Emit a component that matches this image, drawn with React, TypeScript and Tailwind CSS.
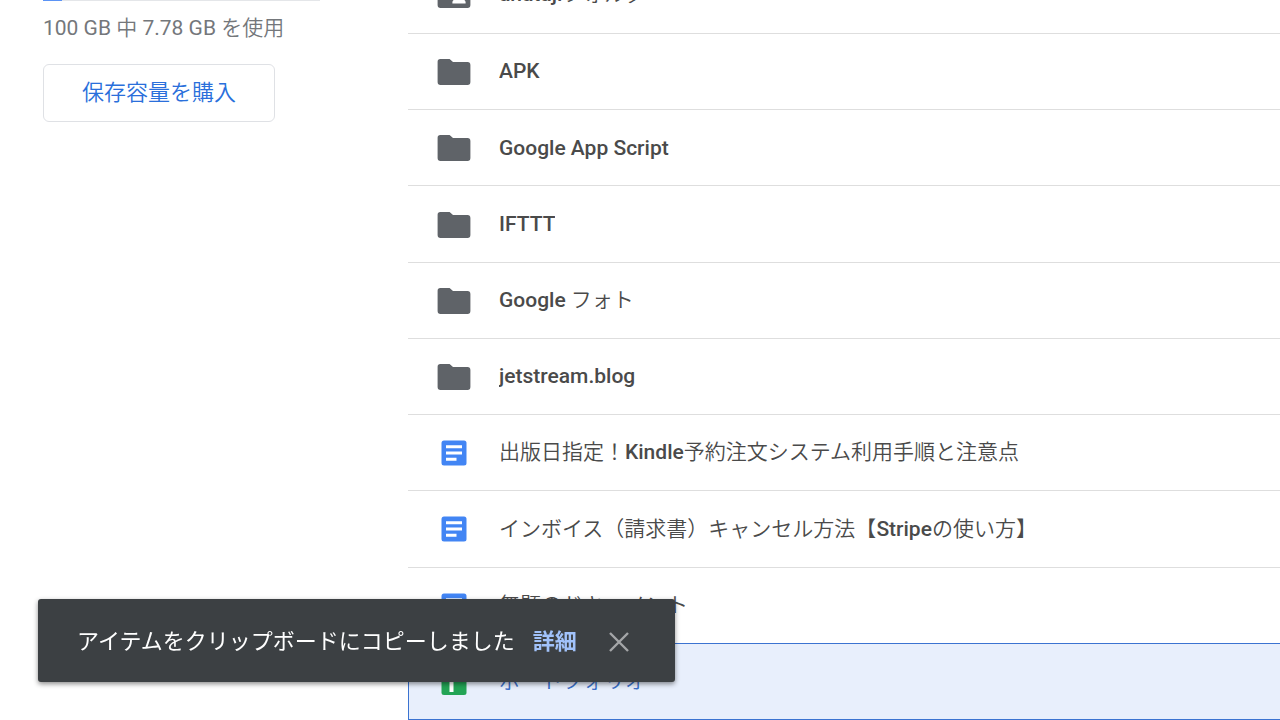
import { clsx } from "clsx";
import type { ReactNode } from "react";

type FileKind = "folder" | "shared" | "doc" | "sheet";

type DriveItem = {
  name: string;
  kind: FileKind;
  selected?: boolean;
};

const items: DriveItem[] = [
  { name: "APK", kind: "folder" },
  { name: "Google App Script", kind: "folder" },
  { name: "IFTTT", kind: "folder" },
  { name: "Google フォト", kind: "folder" },
  { name: "jetstream.blog", kind: "folder" },
  { name: "出版日指定！Kindle予約注文システム利用手順と注意点", kind: "doc" },
  { name: "インボイス（請求書）キャンセル方法【Stripeの使い方】", kind: "doc" },
  { name: "無題のドキュメント", kind: "doc" },
  { name: "ポートフォリオ", kind: "sheet", selected: true },
];

const shapes: Record<FileKind, ReactNode> = {
  folder: (
    <path
      fill="#5f6368"
      d="M6.3 7H15.6L19 10H33.5A3 3 0 0 1 36.4 13V30A3 3 0 0 1 33.5 33H6.5A3 3 0 0 1 3.6 30V9.8A2.8 2.8 0 0 1 6.3 7Z"
    />
  ),
  shared: (
    <>
      <path
        fill="#5f6368"
        d="M6.3 7H15.6L19 10H33.5A3 3 0 0 1 36.4 13V30A3 3 0 0 1 33.5 33H6.5A3 3 0 0 1 3.6 30V9.8A2.8 2.8 0 0 1 6.3 7Z"
      />
      <circle cx="25" cy="18" r="3.3" fill="#fff" />
      <path fill="#fff" d="M18.4 28.6V27C18.4 24.6 22.8 23.4 25 23.4S31.6 24.6 31.6 27V28.6Z" />
    </>
  ),
  doc: (
    <>
      <rect x="7.5" y="7.5" width="25" height="25" rx="2.5" fill="#4285f4" />
      <path fill="#fff" d="M12 12.2H28V15.2H12ZM12 18.5H28V21.5H12ZM12 24.8H22.5V27.8H12Z" />
    </>
  ),
  sheet: (
    <>
      <rect x="7.5" y="8" width="25" height="25" rx="2.5" fill="#23a455" />
      <path fill="#fff" d="M11.5 15H15.5V11.5H19.5V15H28.5V18.5H19.5V30H15.5V18.5H11.5Z" />
    </>
  ),
};

function FileIcon({ kind }: { kind: FileKind }) {
  return (
    <svg viewBox="0 0 40 40" className="size-10 shrink-0" aria-hidden="true">
      {shapes[kind]}
    </svg>
  );
}

// Latin runs are medium weight, Japanese runs are lighter
function MixedText({ text }: { text: string }) {
  const runs = text.match(/[\x20-\x7e]+|[^\x20-\x7e]+/g) ?? [];
  return (
    <span className="truncate">
      {runs.map((run, i) => (
        <span key={i} className={/^[\x20-\x7e]/.test(run) ? "font-medium" : "font-[350]"}>
          {run}
        </span>
      ))}
    </span>
  );
}

function FileRow({ item }: { item: DriveItem }) {
  return (
    <li
      className={clsx(
        "flex min-h-16 flex-1 items-center gap-[25px] border-t pt-px pl-[26px] text-[21px]",
        item.selected
          ? "border-b border-[#3b73d1] bg-[#e8effc] text-[#3b6fc9] shadow-[inset_1px_0_0_#3b73d1]"
          : "border-[#dedede] text-[#4a4a4a]",
      )}
    >
      <FileIcon kind={item.kind} />
      <MixedText text={item.name} />
    </li>
  );
}

function Storage() {
  return (
    <aside className="w-[408px] shrink-0 pr-[88px] pl-[43px]">
      <div className="h-px bg-[#e4e6e9]">
        <div className="h-px w-[7%] bg-[#5b93f5]" />
      </div>
      <p className="mt-3 text-[21px] leading-[30px] text-[#74777b]">
        100 GB <span className="font-[350]">中</span> 7.78 GB{" "}
        <span className="font-[350]">を使用</span>
      </p>
      <button
        type="button"
        className="mt-[21px] h-[58px] rounded-md border border-[#dfe1e5] px-[38px] pb-0.5 text-[22px] font-[350] text-[#2a6fdb]"
      >
        保存容量を購入
      </button>
    </aside>
  );
}

function Toast() {
  return (
    <div
      role="status"
      className="fixed bottom-[38px] left-[38px] flex h-[83px] items-center rounded-[3px] bg-[#3c4043] pt-0.5 pr-[46px] pl-[39px] text-[22px] text-white shadow-[0_2px_5px_rgba(0,0,0,0.45)]"
    >
      <span>アイテムをクリップボードにコピーしました</span>
      <a href="#details" className="ml-[18px] font-bold text-[#a1c2fa]">
        詳細
      </a>
      <button type="button" aria-label="閉じる" className="ml-8">
        <svg viewBox="0 0 20 20" className="size-5" aria-hidden="true">
          <path d="M1 1L19 19M19 1L1 19" stroke="#a4a6a8" strokeWidth="2.4" />
        </svg>
      </button>
    </div>
  );
}

export default function App() {
  return (
    <div className="flex h-screen overflow-hidden bg-white font-['Roboto','Noto_Sans_CJK_JP',sans-serif]">
      <Storage />
      <main className="flex min-w-0 flex-1 flex-col">
        {/* row scrolled partly out of view */}
        <div className="flex h-[33px] shrink-0 items-end overflow-hidden">
          <div className="flex h-[76px] shrink-0 items-center gap-[25px] pl-[26px] text-[21px] text-[#4a4a4a]">
            <FileIcon kind="shared" />
            <MixedText text="anatajiフォルダ" />
          </div>
        </div>
        <ul className="flex flex-1 flex-col">
          {items.map((item) => (
            <FileRow key={item.name} item={item} />
          ))}
        </ul>
      </main>
      <Toast />
    </div>
  );
}
